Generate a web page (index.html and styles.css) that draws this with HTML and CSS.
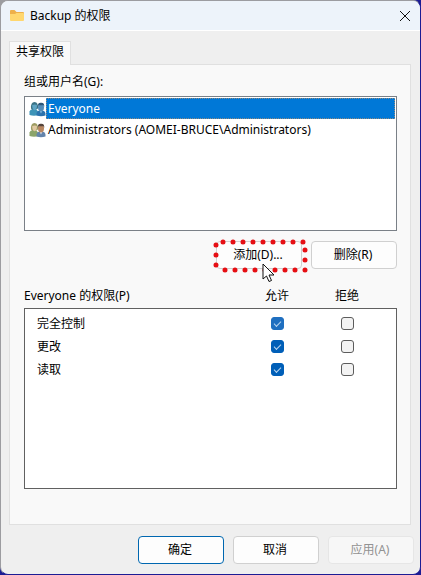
FILE: index.html
```html
<!DOCTYPE html>
<html lang="zh-CN">
<head>
  <meta charset="UTF-8" />
  <title>Backup 的权限</title>
  <link rel="stylesheet" href="styles.css">
</head>
<body>

  <!-- Person pair used in the group list -->
  <svg class="sprite" aria-hidden="true">
    <symbol id="people" viewBox="0 0 17 16">
      <path class="shirt-left" d="M0.500 14 V10.500 Q1 8.500 3.500 8 L7 8 L9.500 11 V14 Q5 15.500 0.500 14Z" />
      <path class="hair-left" d="M2 7.500 Q1.500 1 5.500 1 Q9.500 1 9 7.500 L7 8.500 H3Z" />
      <path class="face-left" d="M3.200 4 Q6 3 7.900 4 Q8.200 8.500 5.600 9.300 Q3 8.500 3.200 4Z" />
      <path class="shirt-right" d="M7.500 14.500 Q7 10.500 10 9.800 L14 9.800 Q17 10.500 16.500 14.500 Q12 16 7.500 14.500Z" />
      <path class="collar" d="M10.500 9.500 L12 12.500 L13.500 9.500Z" />
      <ellipse class="face-right" cx="12" cy="6.500" rx="3" ry="3.900" />
      <path class="hair-right" d="M8.900 6 Q8.300 1.500 12 1.700 Q15.800 1.500 15.200 6 L14.300 4 Q12 4.500 9.800 4Z" />
    </symbol>
  </svg>

  <form class="dialog" onsubmit="return false">
    <header class="titlebar">
      <svg class="folder" viewBox="0 0 16 14" aria-hidden="true">
        <path d="M1 2 Q1 1 2 1 H5.500 L7.500 3 H14 Q15 3 15 4 V6 H1Z" fill="#eeb04a" />
        <path d="M1 5 H6 L7.500 4 H14 Q15 4 15 5 V11 Q15 12 14 12 H2 Q1 12 1 11Z" fill="#ffd76f" />
      </svg>
      <h1>Backup 的权限</h1>
      <button type="button" class="close" aria-label="关闭">
        <svg viewBox="0 0 12 12" aria-hidden="true">
          <path d="M1 1 L11 11 M11 1 L1 11" />
        </svg>
      </button>
    </header>

    <main class="content">
      <div class="tabs" role="tablist">
        <button type="button" class="tab" role="tab" aria-selected="true">共享权限</button>
      </div>

      <section class="panel">
        <div class="label" id="groupLabel">组或用户名(G):</div>
        <ul class="group-list" role="listbox" tabindex="0" aria-labelledby="groupLabel">
          <li class="group everyone" role="option" aria-selected="true">
            <svg class="people"><use href="#people" /></svg>
            <span>Everyone</span>
          </li>
          <li class="group admins" role="option" aria-selected="false">
            <svg class="people"><use href="#people" /></svg>
            <span>Administrators (AOMEI-BRUCE\Administrators)</span>
          </li>
        </ul>

        <div class="actions">
          <div class="marked">
            <button type="button" class="btn">添加(D)...</button>
            <svg class="dots" viewBox="0 0 96 36" aria-hidden="true">
              <path d="M10 4 H91 M12 32 H93 M3 7 V28 M92 12 V23" />
            </svg>
            <svg class="cursor" viewBox="0 0 13 20" aria-hidden="true">
              <path d="M1 1 V16 L4.500 13 L7 18.500 L9.500 17.500 L7 12 H12Z" />
            </svg>
          </div>
          <button type="button" class="btn">删除(R)</button>
        </div>

        <table class="permissions">
          <thead>
            <tr>
              <th scope="col">Everyone 的权限(P)</th>
              <th scope="col" id="allow">允许</th>
              <th scope="col" id="deny">拒绝</th>
            </tr>
          </thead>
          <tbody>
            <tr>
              <th scope="row" id="full">完全控制</th>
              <td><input type="checkbox" class="dim" aria-labelledby="full allow" checked></td>
              <td><input type="checkbox" aria-labelledby="full deny"></td>
            </tr>
            <tr>
              <th scope="row" id="change">更改</th>
              <td><input type="checkbox" aria-labelledby="change allow" checked></td>
              <td><input type="checkbox" aria-labelledby="change deny"></td>
            </tr>
            <tr>
              <th scope="row" id="read">读取</th>
              <td><input type="checkbox" aria-labelledby="read allow" checked></td>
              <td><input type="checkbox" aria-labelledby="read deny"></td>
            </tr>
          </tbody>
        </table>
      </section>
    </main>

    <footer class="footer">
      <button type="submit" class="btn primary">确定</button>
      <button type="button" class="btn">取消</button>
      <button type="button" class="btn" disabled>应用(A)</button>
    </footer>
  </form>

</body>
</html>
```

FILE: styles.css
```css
* {
  box-sizing: border-box;
}

body {
  margin: 0;
  background: linear-gradient(to bottom right, #9c9ca0 30%, #1c1c94 30%);
  font-family: "Noto Sans", "Noto Sans CJK SC", sans-serif;
  font-size: 12px;
  line-height: 16px;
  color: #000;
}

button {
  font: inherit;
  color: inherit;
}

.sprite {
  display: none;
}

.dialog {
  display: flex;
  flex-direction: column;
  min-height: 100vh;
  border: 1px solid;
  border-color: #9c9ca0 #1c1c94 #1c1c94 #9c9ca0;
  border-radius: 8px;
  background: #efefef;
  overflow: hidden;
}

/* Title bar */
.titlebar {
  display: flex;
  align-items: center;
  gap: 5px;
  height: 30px;
  padding: 0 8px;
  background: #edf3fa;
  border-bottom: 1px solid #fff;
}

.titlebar h1 {
  flex: 1;
  margin: 0;
  font-size: 12px;
  font-weight: normal;
}

.folder {
  width: 16px;
  height: 14px;
}

.close {
  display: flex;
  padding: 1px;
  border: none;
  background: none;
}

.close svg {
  width: 12px;
  height: 12px;
  fill: none;
  stroke: #111;
}

/* Tab and its panel */
.content {
  flex: 1;
  display: flex;
  flex-direction: column;
  padding: 10px 9px 0 8px;
}

.tabs {
  display: flex;
}

.tab {
  height: 24px;
  padding: 0 6px 3px;
  margin-bottom: -1px;
  border: 1px solid #e0e0e0;
  border-bottom: none;
  background: #f9f9f9;
  z-index: 1;
}

.panel {
  flex: 1;
  display: flex;
  flex-direction: column;
  padding: 9px 13px 35px 14px;
  border: 1px solid #e0e0e0;
  background: #f9f9f9;
}

.label {
  margin-bottom: 6px;
}

.group-list {
  list-style: none;
  min-height: 135px;
  margin: 0;
  padding: 1px;
  border: 1px solid #7a8087;
  background: #fff;
}

.group {
  display: flex;
  align-items: center;
  padding-left: 3px;
}

.group span {
  flex: 1;
  height: 21px;
  padding: 1px 2px;
  line-height: 20px;
}

.group[aria-selected="true"] span {
  padding: 0 1px;
  border: 1px dotted #8f8a80;
  background: #0078d7;
  color: #fff;
}

.people {
  width: 17px;
  height: 16px;
}

.everyone {
  --hair-left: #3b7386;
  --face-left: #5fa5c4;
  --shirt-left: #3d93b7;
  --hair-right: #2f5879;
  --face-right: #548db9;
  --shirt-right: #2b72ad;
  --collar: #8cc1e4;
}

.admins {
  --hair-left: #9d9c63;
  --face-left: #e0c9a2;
  --shirt-left: #8ba46b;
  --hair-right: #55453d;
  --face-right: #b88660;
  --shirt-right: #6384ab;
  --collar: #e3ebf3;
}

.hair-left { fill: var(--hair-left); }
.face-left { fill: var(--face-left); }
.shirt-left { fill: var(--shirt-left); }
.hair-right { fill: var(--hair-right); }
.face-right { fill: var(--face-right); }
.shirt-right { fill: var(--shirt-right); }
.collar { fill: var(--collar); }

/* Buttons */
.btn {
  width: 86px;
  height: 28px;
  padding: 0 2px 0 0;
  border: 1px solid #d0d0d0;
  border-radius: 4px;
  background: #fdfdfd;
}

.btn.primary {
  border-color: #0067b0;
}

.btn:disabled {
  border-color: #e6e6e6;
  background: #f7f7f7;
  color: #929292;
}

.actions {
  display: flex;
  justify-content: flex-end;
  gap: 9px;
  margin: 10px 0 19px;
}

.marked {
  position: relative;
}

.dots {
  position: absolute;
  top: -3px;
  left: -3px;
  width: 96px;
  height: 36px;
  fill: none;
  stroke: #e60f14;
  stroke-width: 5;
  stroke-linecap: round;
  stroke-dasharray: 0 10;
  pointer-events: none;
  overflow: visible;
}

.cursor {
  position: absolute;
  top: 22px;
  left: 46px;
  width: 13px;
  height: 20px;
  fill: #fff;
  stroke: #111;
  pointer-events: none;
}

/* Permissions */
.permissions {
  flex: 1;
  display: flex;
  flex-direction: column;
}

.permissions thead {
  display: block;
  padding: 0 1px 4px 0;
}

.permissions tbody {
  flex: 1;
  display: block;
  padding-top: 3px;
  border: 1px solid #606060;
  background: #fff;
}

.permissions tr {
  display: grid;
  grid-template-columns: 1fr 70px 70px;
  align-items: center;
  padding-right: 14px;
}

.permissions th,
.permissions td {
  padding: 0;
  font-weight: normal;
  text-align: center;
}

.permissions th:first-child {
  text-align: left;
}

.permissions tbody tr {
  height: 23px;
}

.permissions tbody th {
  padding-left: 12px;
}

input[type="checkbox"] {
  appearance: none;
  display: block;
  width: 13px;
  height: 13px;
  margin: 0 auto;
  border: 1px solid #5c5c5c;
  border-radius: 3px;
  background: #f3f3f3;
}

input[type="checkbox"]:checked {
  display: grid;
  place-items: center;
  border-color: #005fb8;
  background: #005fb8;
}

input[type="checkbox"]:checked::before {
  content: "";
  width: 6px;
  height: 3px;
  margin-bottom: 2px;
  border: solid #b9d6f0;
  border-width: 0 0 1px 1px;
  transform: rotate(-45deg);
}

input.dim:checked {
  border-color: #1f6fc0;
  background: #1f6fc0;
}

/* Bottom buttons */
.footer {
  display: flex;
  justify-content: flex-end;
  gap: 9px;
  padding: 11px 6px 10px;
}
```
